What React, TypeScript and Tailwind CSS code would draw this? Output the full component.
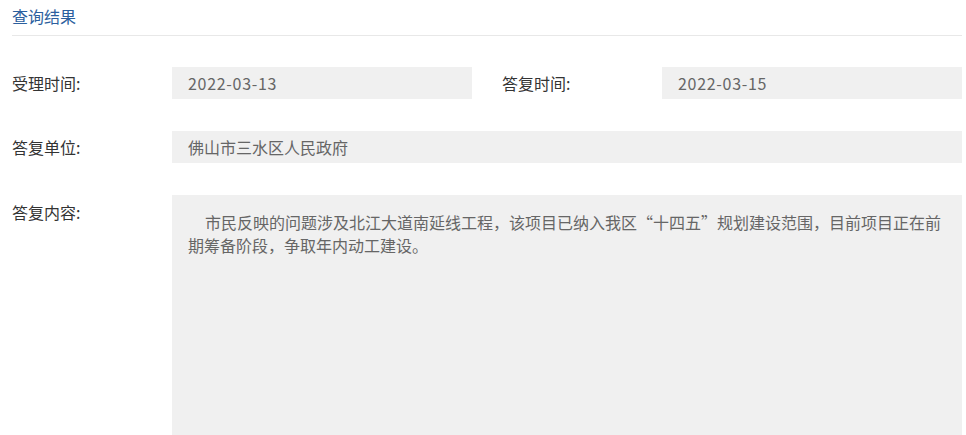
import React from "react";

const font = { fontFamily: '"Microsoft YaHei", "Noto Sans CJK SC", "Noto Sans", sans-serif' };

function Label({ children }: { children: React.ReactNode }) {
  return <div className="w-[160px] shrink-0 text-[16px] text-[#333] leading-[32px]">{children}</div>;
}

function Field({ children, className = "" }: { children: React.ReactNode; className?: string }) {
  return (
    <div className={`h-[32px] bg-[#f0f0f0] px-4 text-[16px] leading-[32px] text-[#666] ${className}`}>{children}</div>
  );
}

export default function App() {
  return (
    <div className="w-[966px] bg-white" style={font}>
      <div className="ml-3 w-[950px]">
        <div className="h-[36px] border-b border-[#e8e8e8] pt-[5px] text-[16px] leading-[22px] text-[#2c5f9e]">
          查询结果
        </div>

        <div className="mt-[31px] flex">
          <Label>受理时间:</Label>
          <Field className="w-[300px] tracking-[0.7px]">2022-03-13</Field>
          <div className="w-[30px]" />
          <Label>答复时间:</Label>
          <Field className="w-[300px] tracking-[0.7px]">2022-03-15</Field>
        </div>

        <div className="mt-[32px] flex">
          <Label>答复单位:</Label>
          <Field className="flex-1">佛山市三水区人民政府</Field>
        </div>

        <div className="mt-[32px] flex">
          <div className="w-[160px] shrink-0 pt-[5px] text-[16px] leading-[24px] text-[#333]">答复内容:</div>
          <div className="h-[260px] flex-1 bg-[#f0f0f0] px-4 py-4 text-[16px] leading-[23px] text-[#666] indent-[17px]">
            市民反映的问题涉及北江大道南延线工程，该项目已纳入我区“十四五”规划建设范围，目前项目正在前期筹备阶段，争取年内动工建设。
          </div>
        </div>
      </div>
    </div>
  );
}
